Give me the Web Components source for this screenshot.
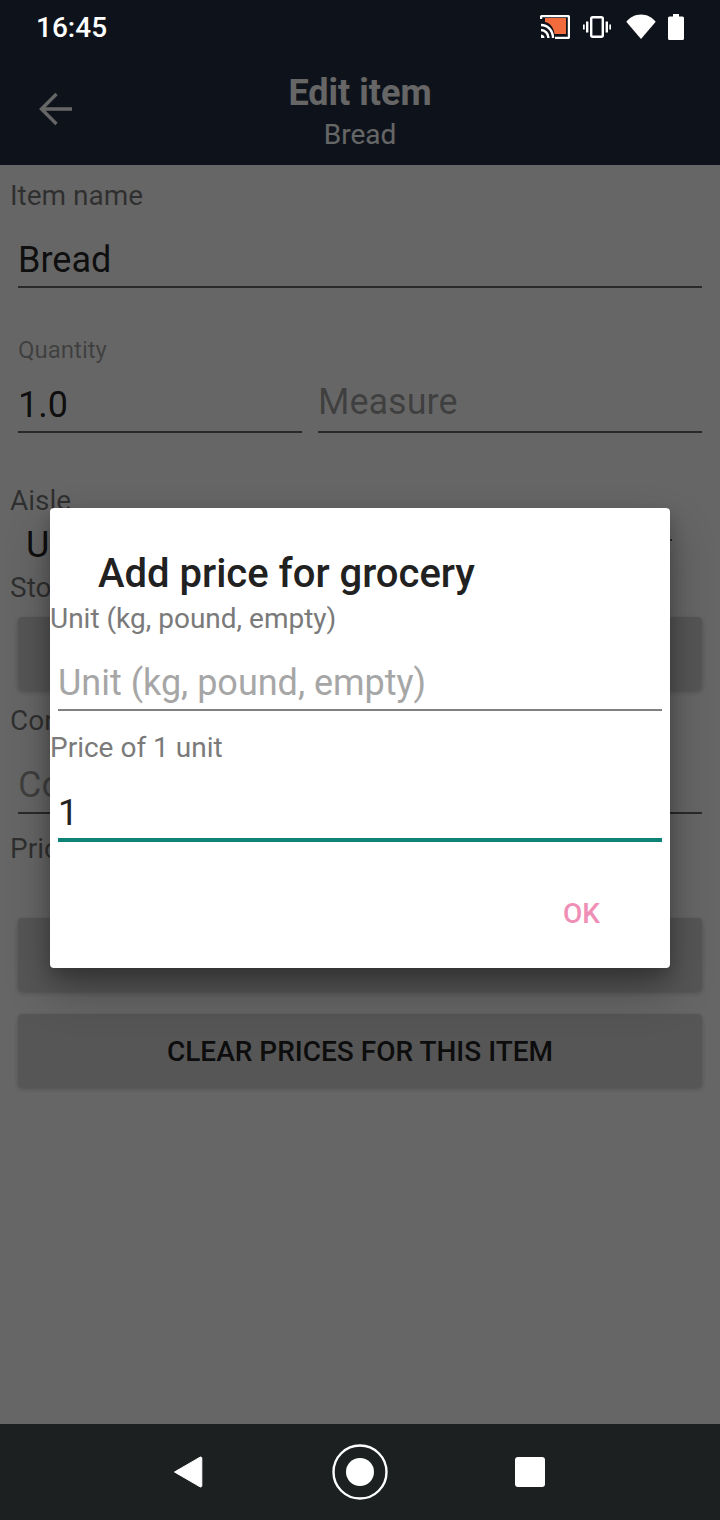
<!DOCTYPE html>
<html lang="en">
<head>
  <meta charset="UTF-8">
  <meta name="viewport" content="width=device-width, initial-scale=1.0">
  <title>Edit item</title>
  <style>
    html, body { margin: 0; padding: 0; }
    body {
      width: 720px;
      height: 1520px;
      overflow: hidden;
      font-family: Roboto, "Noto Sans", sans-serif;
      background: #fff;
      display: flex;
      flex-direction: column;
    }
  </style>
</head>
<body>
  <status-bar></status-bar>

  <edit-screen>
    <app-toolbar title="Edit item" subtitle="Bread"></app-toolbar>
    <form-label style="margin-top:15px">Item name</form-label>
    <form-input value="Bread" style="margin:18px 18px 0;height:58px"></form-input>
    <form-label small style="margin-top:48px;margin-left:18px">Quantity</form-label>
    <div style="display:flex;gap:16px;margin:14px 18px 0;">
      <form-input value="1.0" style="width:284px;height:55px"></form-input>
      <form-input placeholder="Measure" style="--text-bottom:8px;width:384px;height:55px"></form-input>
    </div>
    <form-label style="margin-top:52px">Aisle</form-label>
    <form-spinner value="U" style="margin-top:7px"></form-spinner>
    <form-label style="margin-top:6px">Sto</form-label>
    <flat-button style="margin-top:13px"></flat-button>
    <form-label style="margin-top:15px">Cor</form-label>
    <form-input placeholder="Co" style="--text-bottom:6px;margin:19px 18px 0;height:58px"></form-input>
    <form-label style="margin-top:19px">Pric</form-label>
    <flat-button style="margin-top:53px"></flat-button>
    <flat-button style="margin-top:23px">CLEAR PRICES FOR THIS ITEM</flat-button>

    <price-dialog slot="overlay" heading="Add price for grocery">
      <dialog-field label="Unit (kg, pound, empty)" placeholder="Unit (kg, pound, empty)"></dialog-field>
      <dialog-field label="Price of 1 unit" value="1" focused style="margin-top:20px"></dialog-field>
    </price-dialog>
  </edit-screen>

  <nav-bar></nav-bar>

  <script>
    // Android status bar
    class StatusBar extends HTMLElement {
      constructor() {
        super();
        this.attachShadow({ mode: 'open' });
        this.shadowRoot.innerHTML = `
          <style>
            :host { display: flex; flex: none; height: 48px; background: #0e131b; color: #fff; align-items: center; justify-content: space-between; padding: 0 36px 0 36px; position: relative; z-index: 2; }
            .time { font-size: 28px; font-weight: 500; margin-top: 6px; }
            .icons { display: flex; align-items: center; gap: 12px; margin-top: 5px; }
            svg { display: block; }
          </style>
          <span class="time">16:45</span>
          <div class="icons">
            <svg width="30" height="24" viewBox="0 0 30 24">
              <path d="M5 3h21v16H14.500C14 13 10 7.500 5 7z" fill="#f26b3c"/>
              <path d="M1 4V2.500A1.500 1.500 0 0 1 2.500 1h25A1.500 1.500 0 0 1 29 2.500v19a1.500 1.500 0 0 1-1.500 1.500H15" fill="none" stroke="#fff" stroke-width="2.400"/>
              <path d="M1 10c6.500 0 12 5.500 12 13M1 15c4 0 7.500 3.500 7.500 8" fill="none" stroke="#fff" stroke-width="2.400"/>
              <path d="M1 19.500c2 0 3.500 1.500 3.500 3.500H1z" fill="#fff"/>
            </svg>
            <svg width="28" height="22" viewBox="0 0 28 22" style="margin-left:1px">
              <rect x="8.200" y="1.200" width="11.600" height="19.600" rx="1.500" fill="none" stroke="#fff" stroke-width="2.400"/>
              <path d="M4.200 5.500v11M23.800 5.500v11" stroke="#fff" stroke-width="2.400" fill="none"/>
              <path d="M.800 8.500v5M27.200 8.500v5" stroke="#fff" stroke-width="1.800" fill="none"/>
            </svg>
            <svg width="30" height="25" viewBox="0 0 30 25" style="margin-left:3px">
              <path d="M15 25 .300 7.800C3.900 3.300 9.100.500 15 .500s11.100 2.800 14.700 7.300z" fill="#fff"/>
            </svg>
            <svg width="16" height="26" viewBox="0 0 16 26">
              <path d="M5 0h6v2.500h3.500A1.500 1.500 0 0 1 16 4v20.500a1.500 1.500 0 0 1-1.500 1.500h-13A1.500 1.500 0 0 1 0 24.500V4a1.500 1.500 0 0 1 1.500-1.500H5z" fill="#fff"/>
            </svg>
          </div>`;
      }
    }

    // Screen body: page content with the dim layer and dialog on top
    class EditScreen extends HTMLElement {
      constructor() {
        super();
        this.attachShadow({ mode: 'open' });
        this.shadowRoot.innerHTML = `
          <style>
            :host { display: flex; flex-direction: column; flex: 1; min-height: 0; position: relative; background: #fff; overflow: hidden; }
            .scrim { position: absolute; inset: 0; background: rgba(0,0,0,.6); display: flex; justify-content: center; align-items: flex-start; padding-top: 460px; box-sizing: border-box; }
          </style>
          <slot></slot>
          <div class="scrim"><slot name="overlay"></slot></div>`;
      }
    }

    class AppToolbar extends HTMLElement {
      constructor() {
        super();
        this.attachShadow({ mode: 'open' });
        this.shadowRoot.innerHTML = `
          <style>
            :host { display: block; flex: none; height: 117px; background: #233044; color: #fff; position: relative; text-align: center; }
            svg { position: absolute; left: 38px; top: 43px; }
            .title { font-size: 36px; font-weight: 700; line-height: 40px; padding-top: 25px; }
            .sub { font-size: 28px; line-height: 32px; margin-top: 6px; }
          </style>
          <svg width="36" height="36" viewBox="0 0 36 36"><path d="M34 18H5M18.500 3 3.500 18l15 15" fill="none" stroke="#fff" stroke-width="3.400"/></svg>
          <div class="title">${this.getAttribute('title')}</div>
          <div class="sub">${this.getAttribute('subtitle')}</div>`;
      }
    }

    class FormLabel extends HTMLElement {
      constructor() {
        super();
        this.attachShadow({ mode: 'open' });
        this.shadowRoot.innerHTML = `
          <style>
            :host { display: block; flex: none; margin-left: 10px; font-size: 28px; line-height: 32px; color: rgba(0,0,0,.54); }
            :host([small]) { font-size: 24px; line-height: 28px; color: rgba(0,0,0,.38); }
          </style>
          <slot></slot>`;
      }
    }

    class FormInput extends HTMLElement {
      constructor() {
        super();
        this.attachShadow({ mode: 'open' });
        const value = this.getAttribute('value');
        const text = value || this.getAttribute('placeholder') || '';
        this.shadowRoot.innerHTML = `
          <style>
            :host { display: block; flex: none; box-sizing: border-box; border-bottom: 2px solid rgba(0,0,0,.6); position: relative; font-size: 36px; }
            span { position: absolute; left: 0; bottom: var(--text-bottom, 5px); line-height: 42px; color: rgba(0,0,0,.87); }
            span.hint { color: rgba(0,0,0,.38); }
          </style>
          <span class="${value ? '' : 'hint'}">${text}</span>`;
      }
    }

    class FormSpinner extends HTMLElement {
      constructor() {
        super();
        this.attachShadow({ mode: 'open' });
        this.shadowRoot.innerHTML = `
          <style>
            :host { display: block; flex: none; box-sizing: border-box; height: 42px; margin: 0 48px 0 18px; padding-left: 8px; font-size: 36px; line-height: 42px; color: rgba(0,0,0,.87); position: relative; }
            /* spinner corner mark, only its tip shows beside the dialog */
            :host::after { content: ""; position: absolute; right: 0; top: 15px; width: 4px; height: 2px; background: rgba(0,0,0,.6); }
          </style>
          ${this.getAttribute('value')}`;
      }
    }

    class FlatButton extends HTMLElement {
      constructor() {
        super();
        this.attachShadow({ mode: 'open' });
        this.shadowRoot.innerHTML = `
          <style>
            :host { display: flex; flex: none; box-sizing: border-box; height: 73px; padding-top: 2px; margin: 0 18px; align-items: center; justify-content: center; background: #d6d6d6; border-radius: 4px; box-shadow: 0 2px 5px rgba(0,0,0,.22); font-size: 28px; font-weight: 500; color: rgba(0,0,0,.87); }
          </style>
          <slot></slot>`;
      }
    }

    class PriceDialog extends HTMLElement {
      constructor() {
        super();
        this.attachShadow({ mode: 'open' });
        this.shadowRoot.innerHTML = `
          <style>
            :host { display: block; width: 620px; height: 460px; box-sizing: border-box; background: #fff; border-radius: 4px; box-shadow: 0 22px 44px rgba(0,0,0,.3), 0 8px 16px rgba(0,0,0,.2); }
            h2 { margin: 0 0 3px; padding: 41px 0 0 48px; font-size: 40px; font-weight: 500; line-height: 50px; color: #212121; }
            .ok { display: flex; justify-content: flex-end; padding: 55px 70px 0 0; font-size: 28px; font-weight: 500; line-height: 34px; color: #ef8fb6; }
          </style>
          <h2>${this.getAttribute('heading')}</h2>
          <slot></slot>
          <div class="ok">OK</div>`;
      }
    }

    class DialogField extends HTMLElement {
      constructor() {
        super();
        this.attachShadow({ mode: 'open' });
        const value = this.getAttribute('value');
        const text = value || this.getAttribute('placeholder') || '';
        this.shadowRoot.innerHTML = `
          <style>
            :host { display: block; }
            .label { font-size: 28px; line-height: 34px; color: #7a7a7a; }
            .input { box-sizing: border-box; height: 75px; margin: 0 8px; border-bottom: 2px solid #808080; display: flex; align-items: flex-end; padding-bottom: 5px; font-size: 36px; line-height: 42px; color: #a6a6a6; }
            .input.val { color: #212121; }
            :host([focused]) .input { border-bottom: 4px solid #0f8376; height: 77px; padding-bottom: 4px; }
          </style>
          <div class="label">${this.getAttribute('label')}</div>
          <div class="input ${value ? 'val' : ''}">${text}</div>`;
      }
    }

    // Android navigation bar
    class NavBar extends HTMLElement {
      constructor() {
        super();
        this.attachShadow({ mode: 'open' });
        this.shadowRoot.innerHTML = `
          <style>
            :host { display: flex; flex: none; height: 96px; background: #1c2021; align-items: center; justify-content: center; position: relative; z-index: 2; }
            .row { display: flex; align-items: center; gap: 127px; }
            svg { display: block; }
            svg.back { margin-right: 2.500px; }
            svg.recents { margin-right: 2.500px; }
          </style>
          <div class="row">
            <svg class="back" width="30" height="34" viewBox="0 0 30 34"><path d="M1.500 17 27 2.200c.900-.500 1.800 0 1.800 1v27.600c0 1-.900 1.500-1.800 1z" fill="#fff" stroke="#fff" stroke-linejoin="round" stroke-width="1"/></svg>
            <svg width="56" height="56" viewBox="0 0 56 56"><circle cx="28" cy="28" r="26.500" fill="none" stroke="#fff" stroke-width="2.400"/><circle cx="28" cy="28" r="14" fill="#fff"/></svg>
            <svg class="recents" width="30" height="30" viewBox="0 0 30 30"><rect width="30" height="30" rx="3" fill="#fff"/></svg>
          </div>`;
      }
    }

    customElements.define('status-bar', StatusBar);
    customElements.define('edit-screen', EditScreen);
    customElements.define('app-toolbar', AppToolbar);
    customElements.define('form-label', FormLabel);
    customElements.define('form-input', FormInput);
    customElements.define('form-spinner', FormSpinner);
    customElements.define('flat-button', FlatButton);
    customElements.define('price-dialog', PriceDialog);
    customElements.define('dialog-field', DialogField);
    customElements.define('nav-bar', NavBar);
  </script>
</body>
</html>
